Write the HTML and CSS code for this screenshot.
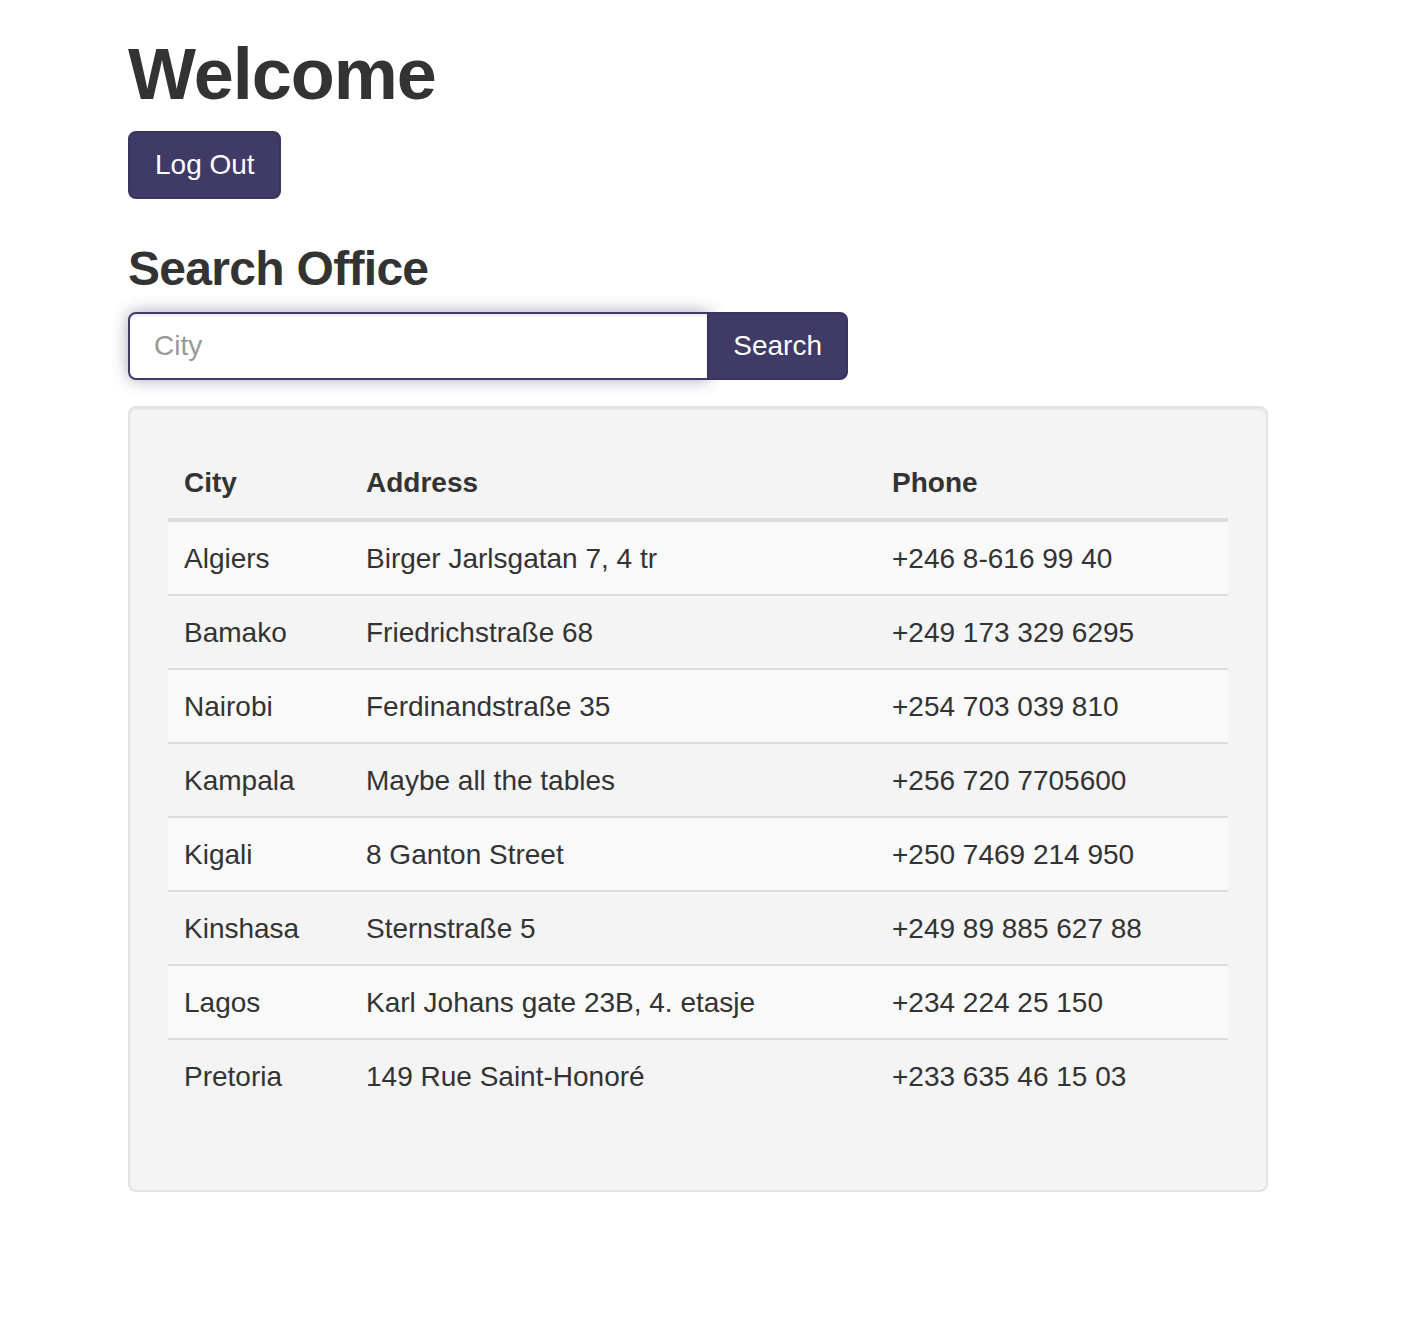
FILE: index.html
```html
<!DOCTYPE html>
<html lang="en">
<head>
<meta charset="utf-8">
<title>Welcome</title>
<link rel="stylesheet" href="styles.css">
</head>
<body>
<main class="page">
  <h1 class="title">Welcome</h1>
  <button class="btn">Log Out</button>
  <h3 class="subtitle">Search Office</h3>
  <form class="search" onsubmit="return false">
    <input class="search-input" type="text" placeholder="City">
    <button class="btn btn-attached" type="submit">Search</button>
  </form>
  <div class="well">
    <table class="table">
      <colgroup>
        <col class="col-city">
        <col class="col-address">
        <col class="col-phone">
      </colgroup>
      <thead>
        <tr><th>City</th><th>Address</th><th>Phone</th></tr>
      </thead>
      <tbody>
        <tr><td>Algiers</td><td>Birger Jarlsgatan 7, 4 tr</td><td>+246 8-616 99 40</td></tr>
        <tr><td>Bamako</td><td>Friedrichstraße 68</td><td>+249 173 329 6295</td></tr>
        <tr><td>Nairobi</td><td>Ferdinandstraße 35</td><td>+254 703 039 810</td></tr>
        <tr><td>Kampala</td><td>Maybe all the tables</td><td>+256 720 7705600</td></tr>
        <tr><td>Kigali</td><td>8 Ganton Street</td><td>+250 7469 214 950</td></tr>
        <tr><td>Kinshasa</td><td>Sternstraße 5</td><td>+249 89 885 627 88</td></tr>
        <tr><td>Lagos</td><td>Karl Johans gate 23B, 4. etasje</td><td>+234 224 25 150</td></tr>
        <tr><td>Pretoria</td><td>149 Rue Saint-Honoré</td><td>+233 635 46 15 03</td></tr>
      </tbody>
    </table>
  </div>
</main>
</body>
</html>
```
FILE: styles.css
```css
* { box-sizing: border-box; }

html, body {
  margin: 0;
  padding: 0;
  background: #ffffff;
}

body {
  font-family: "Liberation Sans", Arial, Helvetica, sans-serif;
  font-size: 28px;
  line-height: 40px;
  color: #333333;
}

.page {
  padding: 0 0 0 128px;
  width: 1268px;
}

.title {
  font-size: 72px;
  line-height: 80px;
  font-weight: 700;
  letter-spacing: -1px;
  margin: 34px 0 17px;
}

.btn {
  display: inline-block;
  font-family: inherit;
  font-size: 28px;
  line-height: 40px;
  padding: 12px 24px 12px 25px;
  border: 2px solid #3a3460;
  border-radius: 8px;
  background: #403a66;
  color: #ffffff;
  cursor: pointer;
}

.subtitle {
  font-size: 48px;
  line-height: 53px;
  font-weight: 700;
  letter-spacing: -0.7px;
  margin: 43px 0 17px;
}

.search {
  display: flex;
  width: 720px;
  margin: 0 0 26px;
}

.search-input {
  flex: 1;
  height: 68px;
  font-family: inherit;
  font-size: 28px;
  line-height: 40px;
  padding: 12px 24px;
  color: #555555;
  background: #ffffff;
  border: 2px solid #403a66;
  border-radius: 8px 0 0 8px;
  box-shadow: inset 0 2px 2px rgba(0, 0, 0, 0.075), 0 0 16px rgba(64, 58, 102, 0.45);
  outline: none;
  position: relative;
  z-index: 1;
}

.search-input::placeholder {
  color: #999999;
}

.btn-attached {
  height: 68px;
  padding: 12px 24px;
  border-radius: 0 8px 8px 0;
  margin-left: -2px;
  position: relative;
  z-index: 2;
}

.well {
  width: 1140px;
  padding: 38px;
  background: #f4f4f4;
  border: 2px solid #e3e3e3;
  border-radius: 8px;
  box-shadow: inset 0 2px 2px rgba(0, 0, 0, 0.05);
}

.table {
  width: 100%;
  border-collapse: separate;
  border-spacing: 0;
  margin: 0 0 40px;
}

.col-city { width: 182px; }
.col-address { width: 526px; }
.col-phone { width: 352px; }

.table th {
  text-align: left;
  font-weight: 700;
  padding: 17px 16px 15px;
  line-height: 40px;
  vertical-align: bottom;
  border-bottom: 4px solid #dddddd;
}

.table td {
  padding: 17px 16px 15px;
  line-height: 40px;
  vertical-align: top;
  border-top: 2px solid #dddddd;
}

.table tbody tr:first-child td {
  border-top: 0;
}

.table tbody tr:nth-child(odd) td {
  background: #f9f9f9;
}
```
